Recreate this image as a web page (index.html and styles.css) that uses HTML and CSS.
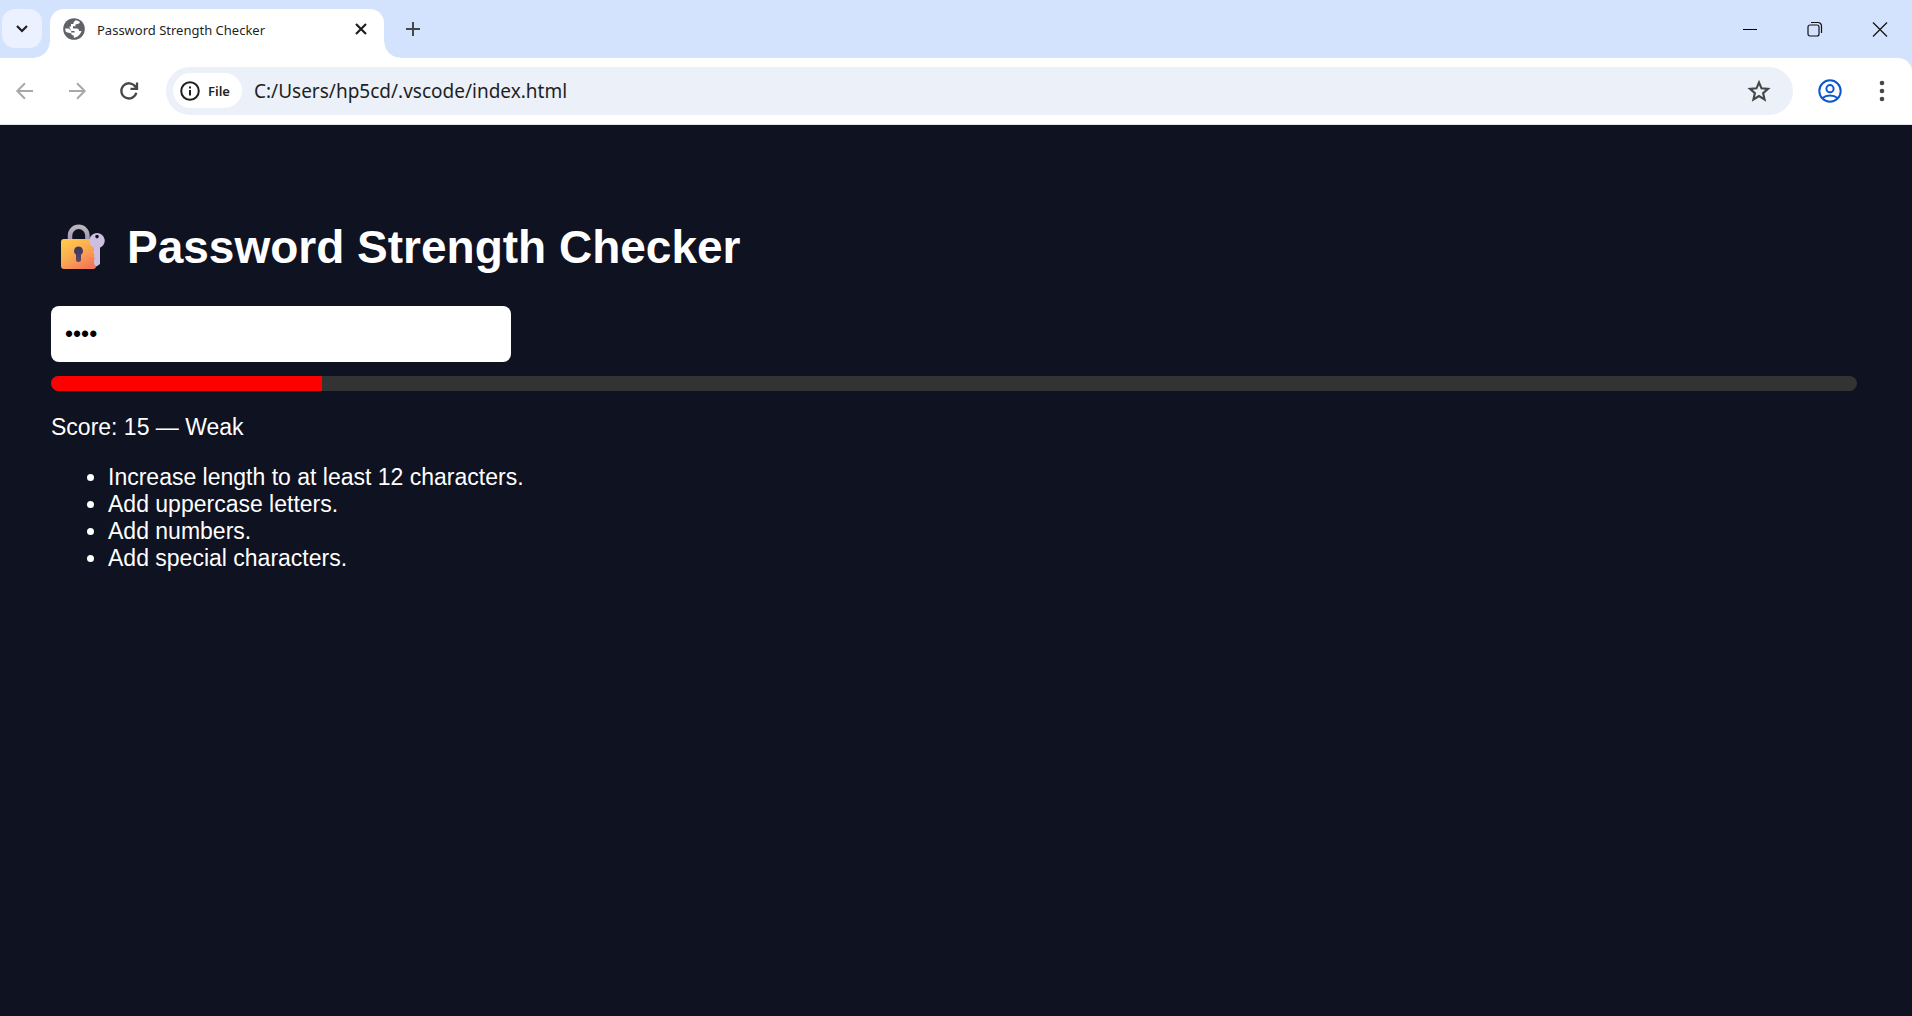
FILE: index.html
```html
<!DOCTYPE html>
<html lang="en">
<head>
<meta charset="utf-8">
<title>Password Strength Checker</title>
<link rel="stylesheet" href="styles.css">
</head>
<body>
<header class="browser">
  <div class="tab-strip">
    <button class="tab-search" aria-label="Search tabs">
      <svg width="14" height="14" viewBox="0 0 14 14"><path d="M2 4l5 5 5-5" fill="none" stroke="#1f1f1f" stroke-width="2.2"/></svg>
    </button>
    <div class="tab">
      <svg class="favicon" width="22" height="22" viewBox="0 0 22 22"><circle cx="11" cy="11" r="10.8" fill="#5f6368"/><path d="M12.500 2.200C14.500 2.400 16 3.200 17 4C16.500 6 14.500 6.200 12.500 6.200V8.300H10V10.500H14C15.500 10.500 16 11.500 16 13H18.500C17.500 16.500 14.500 19.500 10.800 19.800V17.500C8.800 17.500 8.200 16.500 8.200 14.500H11.500V13H8.500L5.500 10.500H2.200C2.200 12 2.500 13 3 14L8.200 15.500V12.500L6.500 10V8.500H8V6H10.500V4.500Z" fill="#fff"/></svg>
      <span class="tab-title">Password Strength Checker</span>
      <button class="tab-close" aria-label="Close tab">
        <svg width="14" height="14" viewBox="0 0 14 14"><path d="M2 2l10 10M12 2L2 12" stroke="#1f1f1f" stroke-width="2.2"/></svg>
      </button>
    </div>
    <button class="new-tab" aria-label="New tab">
      <svg width="16" height="16" viewBox="0 0 16 16"><path d="M8 1v14M1 8h14" stroke="#474747" stroke-width="2"/></svg>
    </button>
    <div class="window-controls">
      <button aria-label="Minimize"><svg width="16" height="16" viewBox="0 0 16 16"><path d="M1 8.500h14" stroke="#000" stroke-width="1"/></svg></button>
      <button aria-label="Restore"><svg width="16" height="16" viewBox="0 0 16 16" fill="none" stroke="#111" stroke-width="1.200"><rect x="1" y="4" width="11" height="11" rx="2"/><path d="M4 1.500h7a3.500 3.500 0 0 1 3.500 3.500v7"/></svg></button>
      <button aria-label="Close"><svg width="16" height="16" viewBox="0 0 16 16"><path d="M1 1.500l14 14M15 1.500L1 15.500" stroke="#111" stroke-width="1.200"/></svg></button>
    </div>
  </div>
  <div class="toolbar">
    <nav class="nav-buttons">
      <button aria-label="Back"><svg width="20" height="20" viewBox="0 0 20 20"><path d="M18 10H3M10 2.300L2.300 10L10 17.700" fill="none" stroke="#a8a8a8" stroke-width="2"/></svg></button>
      <button aria-label="Forward"><svg width="20" height="20" viewBox="0 0 20 20"><path d="M2 10h15M10 2.300L17.700 10L10 17.700" fill="none" stroke="#a8a8a8" stroke-width="2"/></svg></button>
      <button aria-label="Reload"><svg width="20" height="20" viewBox="0 0 20 20"><path d="M17.300 11.800A7.600 7.600 0 1 1 16.300 5.700L17.600 7.400M18 1.500V7.900H11.500" fill="none" stroke="#474747" stroke-width="2.300"/></svg></button>
    </nav>
    <div class="omnibox">
      <button class="site-info">
        <svg width="20" height="20" viewBox="0 0 20 20"><circle cx="10" cy="10" r="8.800" fill="none" stroke="#1f1f1f" stroke-width="2"/><path d="M10 9v5.500M10 5.500v2" stroke="#1f1f1f" stroke-width="2"/></svg>
        <span>File</span>
      </button>
      <input class="url" type="text" aria-label="Address" value="C:/Users/hp5cd/.vscode/index.html">
      <button class="bookmark" aria-label="Bookmark this page"><svg width="24" height="24" viewBox="0 0 24 24"><path d="M12 3.500L14.500 9.300L21 9.900L16.100 14.100L17.600 20.500L12 17.100L6.400 20.500L7.900 14.100L3 9.900L9.500 9.300Z" fill="none" stroke="#474747" stroke-width="2.100"/></svg></button>
    </div>
    <button class="profile" aria-label="Profile"><svg width="24" height="24" viewBox="0 0 24 24" fill="none" stroke="#0b57d0" stroke-width="2"><circle cx="12" cy="12" r="10.700"/><circle cx="12" cy="9.700" r="3.600"/><path d="M4.500 19C8.500 15.700 15.500 15.700 19.500 19"/></svg></button>
    <button class="menu" aria-label="Menu"><svg width="8" height="24" viewBox="0 0 8 24" fill="#474747"><circle cx="4" cy="4" r="2.300"/><circle cx="4" cy="12" r="2.300"/><circle cx="4" cy="20" r="2.300"/></svg></button>
  </div>
</header>
<main class="page">
  <h1 class="heading">
    <svg class="lock" width="46" height="46" viewBox="0 0 46 46" aria-hidden="true">
      <defs>
        <linearGradient id="body" x1="0" y1="0" x2=".7" y2="1"><stop offset="0" stop-color="#ffce4e"/><stop offset=".5" stop-color="#fbad50"/><stop offset="1" stop-color="#f4785a"/></linearGradient>
        <linearGradient id="shackle" x1="0" y1="0" x2="0" y2="1"><stop offset="0" stop-color="#b9b5bd"/><stop offset="1" stop-color="#a294b4"/></linearGradient>
        <linearGradient id="hole" x1="0" y1="0" x2="0" y2="1"><stop offset="0" stop-color="#3c3560"/><stop offset="1" stop-color="#5c4566"/></linearGradient>
      </defs>
      <path d="M10 17V11.500a8.700 8.700 0 0 1 17.400 0v5.500" fill="none" stroke="url(#shackle)" stroke-width="4.500"/>
      <rect x="1" y="15" width="35" height="30" rx="3" fill="url(#body)"/>
      <path d="M18.500 22.500a4.500 4.500 0 0 1 2.500 8.200V35.500a2.500 2.500 0 0 1-5 0V30.700a4.500 4.500 0 0 1 2.500-8.200Z" fill="url(#hole)"/>
      <path d="M37 9A7.700 7.700 0 0 0 34 23.800V27L33 28.500L34.500 30.500L33.500 32.500L35 34.500L34 36.500V40L36.500 42.500L40 40V23.800A7.700 7.700 0 0 0 37 9ZM37 10.800a1.800 1.800 0 1 1 0 3.600a1.800 1.800 0 1 1 0-3.600Z" fill="#cdbfdf" fill-rule="evenodd"/>
    </svg>
    <span>Password Strength Checker</span>
  </h1>
  <input class="password" type="password" aria-label="Password" value="abcd">
  <div class="meter"><div class="meter-fill" style="width: 15%"></div></div>
  <p class="score">Score: 15 — Weak</p>
  <ul class="tips">
    <li>Increase length to at least 12 characters.</li>
    <li>Add uppercase letters.</li>
    <li>Add numbers.</li>
    <li>Add special characters.</li>
  </ul>
</main>
</body>
</html>
```
FILE: styles.css
```css
* { box-sizing: border-box; }
body {
  margin: 0;
  min-height: 100vh;
  background: #0f1220;
  color: #fff;
  font-family: "Liberation Sans", Arial, sans-serif;
  font-size: 23px;
}
button {
  display: flex;
  align-items: center;
  justify-content: center;
  flex: none;
  margin: 0;
  padding: 0;
  border: 0;
  background: none;
}
svg { display: block; flex: none; }

.browser {
  background: #d3e3fd;
  color: #1f1f1f;
  font-family: "Noto Sans", "Open Sans", sans-serif;
}
.tab-strip {
  display: flex;
  align-items: center;
  height: 58px;
  padding: 9px 0 0 2px;
}
.tab-search {
  align-self: flex-start;
  width: 40px;
  height: 39px;
  border-radius: 13px;
  background: #ebf1fe;
}
.tab {
  position: relative;
  display: flex;
  align-items: center;
  gap: 12px;
  width: 334px;
  height: 49px;
  margin-left: 8px;
  padding: 0 16px 10px 13px;
  border-radius: 14px 14px 0 0;
  background: #fff;
}
.tab::before,
.tab::after {
  content: "";
  position: absolute;
  bottom: 0;
  width: 16px;
  height: 16px;
}
.tab::before {
  right: 100%;
  background: radial-gradient(circle at 0 0, transparent 15px, #fff 16px);
}
.tab::after {
  left: 100%;
  background: radial-gradient(circle at 100% 0, transparent 15px, #fff 16px);
}
.tab-title { flex: 1; padding-top: 2px; font-size: 13px; line-height: 20px; }
.new-tab { width: 32px; height: 39px; margin: 0 auto 10px 13px; }
.window-controls { display: flex; margin-bottom: 10px; }
.window-controls button { width: 65px; height: 39px; }

.toolbar {
  display: flex;
  align-items: center;
  height: 67px;
  padding: 0 26px 1px 9px;
  border-bottom: 1px solid #dfe1e5;
  border-top-right-radius: 14px;
  background: #fff;
}
.nav-buttons { display: flex; gap: 20px; }
.nav-buttons button { width: 32px; height: 32px; }
.omnibox {
  display: flex;
  align-items: center;
  flex: 1;
  height: 48px;
  margin-left: 21px;
  padding: 0 22px 0 7px;
  border-radius: 24px;
  background: #ebf0f9;
}
.site-info {
  justify-content: flex-start;
  gap: 8px;
  width: 69px;
  height: 35px;
  padding-left: 7px;
  border-radius: 18px;
  background: #fff;
  color: #1f1f1f;
  font: 600 13px/20px "Noto Sans", "Open Sans", sans-serif;
}
.url {
  flex: 1;
  min-width: 0;
  padding: 0 12px;
  border: 0;
  background: none;
  color: #1f1f1f;
  font: 19px/28px "Noto Sans", "Open Sans", sans-serif;
}
.profile { margin-left: 25px; }
.menu { margin-left: 36px; }

.page { padding: 94px 55px 0 51px; }
.heading {
  display: flex;
  align-items: center;
  gap: 21px;
  margin: 0 0 31px;
  padding-left: 9px;
  font-size: 46px;
  line-height: 56px;
}
.password {
  display: block;
  width: 460px;
  max-width: 100%;
  height: 56px;
  padding: 0 14px;
  border: 0;
  border-radius: 8px;
  background: #fff;
  color: #000;
  font: 23px "Liberation Sans", Arial, sans-serif;
}
.meter {
  height: 15px;
  margin-top: 14px;
  border-radius: 8px;
  overflow: hidden;
  background: #333;
}
.meter-fill { height: 100%; background: #f00; }
.score { margin: 23px 0; line-height: 27px; }
.tips { margin: 0; padding-left: 57px; line-height: 27px; }
```
